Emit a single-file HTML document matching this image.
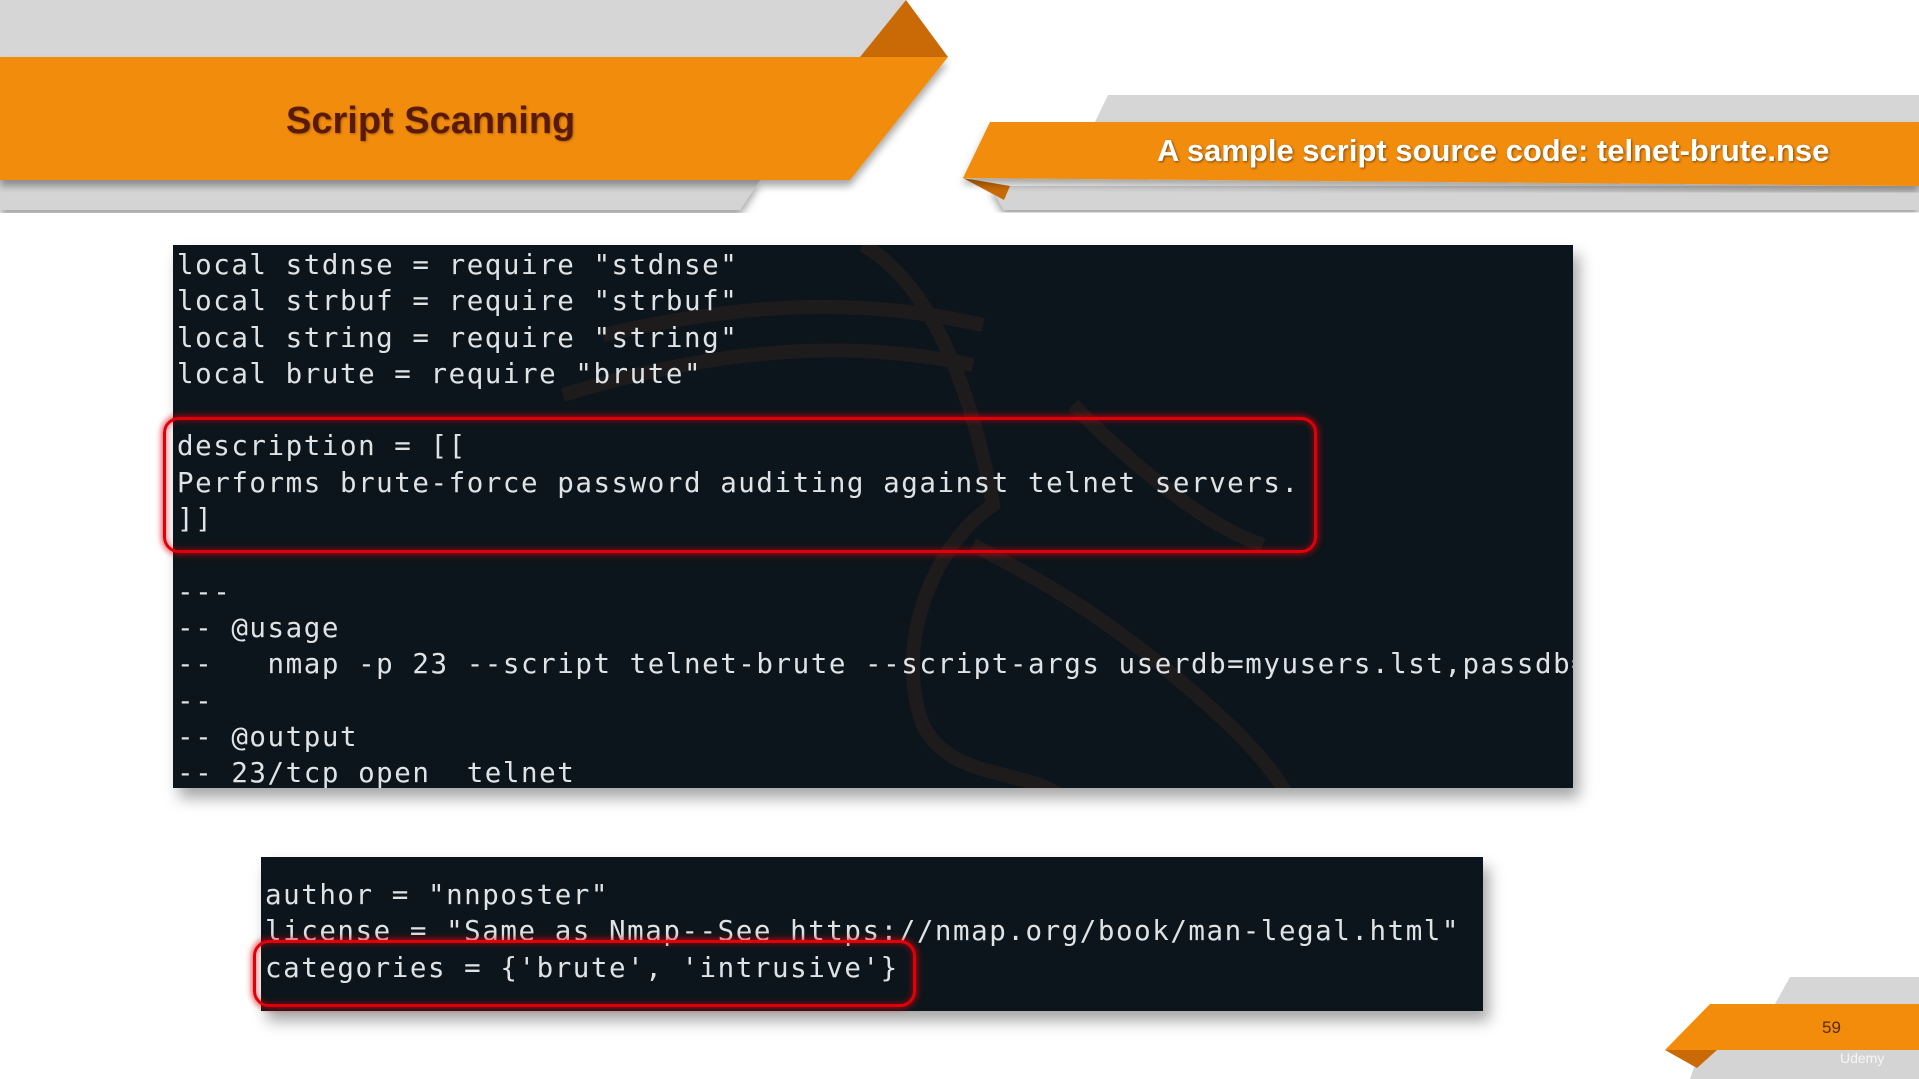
<!DOCTYPE html>
<html><head><meta charset="utf-8"><style>
*{margin:0;padding:0;box-sizing:border-box}
body{width:1919px;height:1079px;background:#fff;position:relative;overflow:hidden;font-family:"Liberation Sans",sans-serif}
.abs{position:absolute}
.code{position:absolute;background:#0c151b;box-shadow:6px 10px 14px rgba(0,0,0,.35);overflow:hidden}
.code pre{position:absolute;font-family:"DejaVu Sans Mono","Liberation Mono",monospace;font-size:27.5px;line-height:36.3px;color:#dfe3e6;white-space:pre;letter-spacing:1.55px}
.red{position:absolute;border:3px solid #e0000a;border-radius:16px;box-shadow:0 0 6px 2px rgba(230,0,10,.6),inset 0 0 6px 1px rgba(230,0,10,.5)}
</style></head><body>
<svg class="abs" style="left:0;top:0" width="1919" height="1079">
 <defs><filter id="sh"><feDropShadow dx="0" dy="6" stdDeviation="4" flood-opacity=".35"/></filter></defs>
 <polygon points="0,0 906,0 880,57 0,57" fill="#d6d6d6"/>
 <polygon points="860,57 906,0 948,57" fill="#c96a06"/>
 <polygon points="0,180 760,180 740,210 0,210" fill="#d4d4d4" filter="url(#sh)"/>
 <polygon points="0,57 948,57 850,180 0,180" fill="#f28c0a" filter="url(#sh)"/>
 <polygon points="1108,95 1919,95 1919,122 1095,122" fill="#d6d6d6"/>
 <polygon points="990,186 1919,186 1919,210 1004,210" fill="#d4d4d4" filter="url(#sh)"/>
 <polygon points="963,178 1010,186 1004,200" fill="#c96a06"/>
 <polygon points="990,122 1919,122 1919,186 963,178" fill="#f28c0a" filter="url(#sh)"/>
 <polygon points="1790,977 1919,977 1919,1004 1775,1004" fill="#d6d6d6"/>
 <polygon points="1700,1050 1919,1050 1919,1079 1690,1079" fill="#d4d4d4"/>
 <polygon points="1665,1050 1717,1050 1697,1068" fill="#c96a06"/>
 <polygon points="1710,1004 1919,1004 1919,1050 1665,1050" fill="#f28c0a"/>
</svg>
<div class="abs" style="left:286px;top:100px;font-weight:bold;font-size:38px;color:#5a1a08;text-shadow:1px 1px 2px rgba(0,0,0,.3)">Script Scanning</div>
<div class="abs" style="left:1157px;top:133px;font-weight:bold;font-size:31px;color:#fff;text-shadow:1px 1px 2px rgba(0,0,0,.5)">A sample script source code: telnet-brute.nse</div>
<div class="abs" style="left:1822px;top:1018px;font-size:17px;color:#5a2a08">59</div>
<div class="abs" style="left:1840px;top:1050px;font-size:14px;color:#fff;opacity:.8">Udemy</div>

<div class="code" style="left:173px;top:245px;width:1400px;height:543px">
 <svg class="abs" style="left:0;top:0" width="1400" height="543" fill="none" stroke="#4a2a22" stroke-width="14" opacity=".3">
  <path d="M690,0 C760,40 800,150 820,260 C760,300 720,400 750,480 C780,540 860,520 900,560"/>
  <path d="M430,90 C560,60 680,50 810,80"/>
  <path d="M390,150 C520,110 660,90 800,120"/>
  <path d="M800,300 C880,340 940,380 1000,430 C1060,480 1100,520 1120,560"/>
  <path d="M900,160 C960,220 1030,280 1090,300"/>
 </svg>
<pre style="left:4px;top:2px">local stdnse = require "stdnse"
local strbuf = require "strbuf"
local string = require "string"
local brute = require "brute"

description = [[
Performs brute-force password auditing against telnet servers.
]]

---
-- @usage
--   nmap -p 23 --script telnet-brute --script-args userdb=myusers.lst,passdb=mypwds.lst
--
-- @output
-- 23/tcp open  telnet</pre>
</div>
<div class="red" style="left:163px;top:417px;width:1154px;height:136px"></div>

<div class="code" style="left:261px;top:857px;width:1222px;height:154px">
<pre style="left:4px;top:20px">author = "nnposter"
license = "Same as Nmap--See https://nmap.org/book/man-legal.html"
categories = {'brute', 'intrusive'}</pre>
</div>
<div class="red" style="left:253px;top:940px;width:663px;height:67px"></div>
</body></html>
